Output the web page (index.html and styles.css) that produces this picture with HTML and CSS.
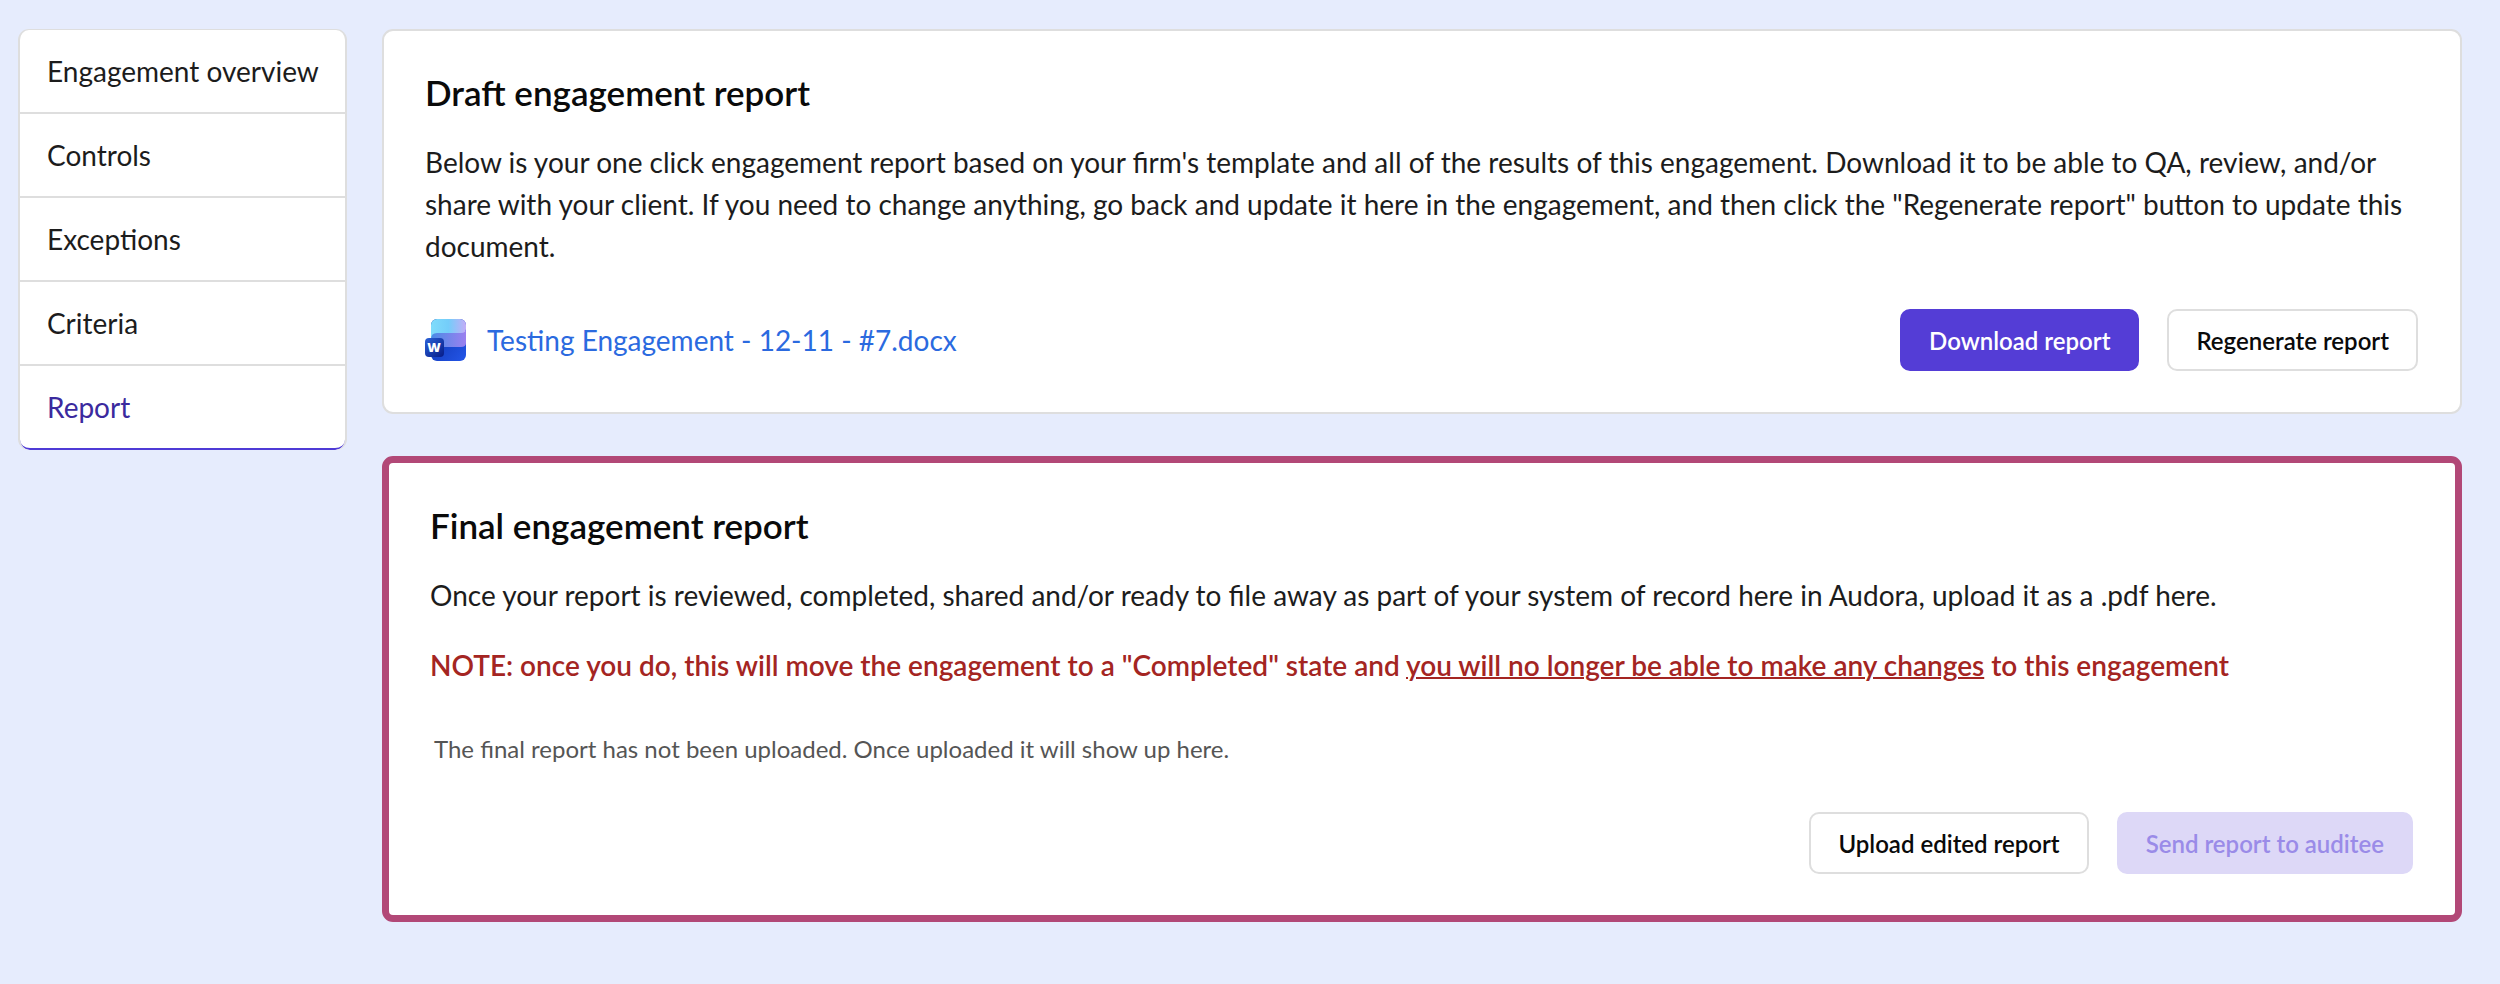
FILE: index.html
```html
<!DOCTYPE html>
<html lang="en">
<head>
  <meta charset="UTF-8">
  <meta name="viewport" content="width=device-width, initial-scale=1.0">
  <title>Engagement report</title>
  <link rel="stylesheet" href="styles.css">
</head>
<body>
  <div class="layout">
    <nav class="side-nav">
      <a class="nav-item" href="#">Engagement overview</a>
      <a class="nav-item" href="#">Controls</a>
      <a class="nav-item" href="#">Exceptions</a>
      <a class="nav-item" href="#">Criteria</a>
      <a class="nav-item active" href="#" aria-current="page">Report</a>
    </nav>

    <main class="content">
      <section class="card">
        <h2 class="card-title">Draft engagement report</h2>
        <p class="card-text">Below is your one click engagement report based on your firm's template and all of the results of this engagement. Download it to be able to QA, review, and/or share with your client. If you need to change anything, go back and update it here in the engagement, and then click the "Regenerate report" button to update this document.</p>
        <div class="card-footer">
          <a class="file-link" href="#">
            <!-- Word icon -->
            <svg class="file-icon" viewBox="0 0 42 42" aria-hidden="true">
              <defs>
                <linearGradient id="top" x1="0" y1="0" x2="1" y2="0">
                  <stop offset="0" stop-color="#7fdcfb"/>
                  <stop offset="0.5" stop-color="#74cdfa"/>
                  <stop offset="1" stop-color="#c3adf7"/>
                </linearGradient>
                <linearGradient id="middle" x1="0" y1="0" x2="1" y2="0">
                  <stop offset="0" stop-color="#4a8ce6"/>
                  <stop offset="1" stop-color="#9b80ef"/>
                </linearGradient>
                <linearGradient id="bottom" x1="0" y1="0" x2="1" y2="1">
                  <stop offset="0" stop-color="#0a2fa8"/>
                  <stop offset="1" stop-color="#2456e8"/>
                </linearGradient>
                <linearGradient id="badge" x1="0" y1="0" x2="1" y2="1">
                  <stop offset="0" stop-color="#2b62d8"/>
                  <stop offset="1" stop-color="#061a86"/>
                </linearGradient>
                <clipPath id="page">
                  <rect x="6" y="0" width="35" height="42" rx="6"/>
                </clipPath>
              </defs>
              <g clip-path="url(#page)">
                <rect x="6" y="0" width="35" height="42" fill="url(#bottom)"/>
                <path d="M6 12H41V24Q41 28 36 28H12Q6 28 6 34Z" fill="url(#middle)"/>
                <path d="M6 0H41V10Q41 14 36 14H12Q6 14 6 20Z" fill="url(#top)"/>
              </g>
              <rect x="0" y="19" width="19" height="19" rx="4" fill="url(#badge)"/>
              <text class="icon-letter" x="9" y="33" text-anchor="middle">W</text>
            </svg>
            <span>Testing Engagement - 12-11 - #7.docx</span>
          </a>
          <div class="actions">
            <button class="btn btn-primary" type="button">Download report</button>
            <button class="btn" type="button">Regenerate report</button>
          </div>
        </div>
      </section>

      <section class="card card-highlight">
        <h2 class="card-title">Final engagement report</h2>
        <p class="card-text">Once your report is reviewed, completed, shared and/or ready to file away as part of your system of record here in Audora, upload it as a .pdf here.</p>
        <p class="card-text note">NOTE: once you do, this will move the engagement to a "Completed" state and <u>you will no longer be able to make any changes</u> to this engagement</p>
        <p class="empty-message">The final report has not been uploaded. Once uploaded it will show up here.</p>
        <div class="card-footer">
          <div class="actions">
            <button class="btn" type="button">Upload edited report</button>
            <button class="btn btn-primary" type="button" disabled>Send report to auditee</button>
          </div>
        </div>
      </section>
    </main>
  </div>
</body>
</html>
```

FILE: styles.css
```css
* {
  box-sizing: border-box;
}

body {
  margin: 0;
  font-family: Lato, sans-serif;
  font-size: 28px;
  line-height: 42px;
  color: #1c1c1c;
  background-color: #e6ecfd;
}

.layout {
  display: flex;
  align-items: flex-start;
  gap: 35px;
  padding: 29px 38px 29px 18px;
}

/* Side navigation */
.side-nav {
  flex: none;
  display: flex;
  flex-direction: column;
  width: 329px;
  border: 2px solid #dedede;
  border-top-width: 1px;
  border-bottom: none;
  border-radius: 11px;
  background-color: #ffffff;
  overflow: hidden;
}

.nav-item {
  padding: 20px 27px;
  border-bottom: 2px solid #dedede;
  color: #1c1c1c;
  text-decoration: none;
  white-space: nowrap;
}

.nav-item.active {
  color: #3b2a9e;
  border-bottom-color: #4f3bd6;
  border-radius: 0 0 10px 10px;
}

/* Cards */
.content {
  flex: 1;
  min-width: 0;
  display: flex;
  flex-direction: column;
  gap: 42px;
}

.card {
  padding: 38px 42px 41px 41px;
  border: 2px solid #dedede;
  border-radius: 11px;
  background-color: #ffffff;
}

.card-highlight {
  padding-top: 39px;
  border: 7px solid #b24877;
}

.card-title {
  margin: 0 0 26px;
  font-size: 35px;
  font-weight: 600;
  line-height: 46px;
  color: #0a0a0a;
}

.card-text {
  margin: 0 0 28px;
}

.note {
  font-weight: 600;
  color: #a42522;
}

.note u {
  text-decoration-thickness: 2px;
}

.empty-message {
  margin: 42px 0 0;
  padding: 0 4px;
  font-size: 24px;
  color: #555555;
}

.card-footer {
  display: flex;
  align-items: center;
  justify-content: flex-end;
  margin-top: 42px;
}

.file-link {
  display: flex;
  align-items: center;
  gap: 20px;
  margin-right: auto;
  color: #2b6adf;
  text-decoration: none;
}

.file-icon {
  flex: none;
  width: 42px;
  height: 42px;
}

.icon-letter {
  font-family: "Open Sans", sans-serif;
  font-size: 13px;
  font-weight: 800;
  fill: #ffffff;
}

/* Buttons */
.actions {
  display: flex;
  gap: 28px;
}

.btn {
  height: 62px;
  padding: 0 27px;
  border: 2px solid #dedede;
  border-radius: 10px;
  background-color: #ffffff;
  color: #0a0a0a;
  font-family: inherit;
  font-size: 24px;
  font-weight: 600;
  cursor: pointer;
}

.btn-primary {
  border-color: #543dd6;
  background-color: #543dd6;
  color: #ffffff;
}

.btn-primary:disabled {
  border-color: #ddd8f7;
  background-color: #ddd8f7;
  color: #9a8be8;
  cursor: default;
}
```
